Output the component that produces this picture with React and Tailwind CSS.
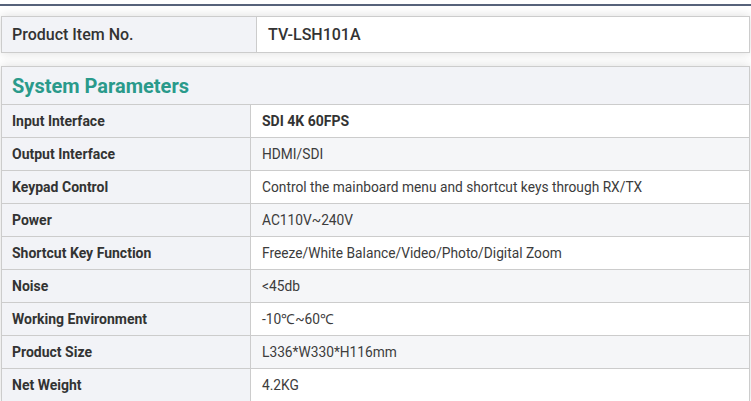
export default function App() {
  const rows = [
    ["Input Interface", "SDI 4K 60FPS", true],
    ["Output Interface", "HDMI/SDI"],
    ["Keypad Control", "Control the mainboard menu and shortcut keys through RX/TX"],
    ["Power", "AC110V~240V"],
    ["Shortcut Key Function", "Freeze/White Balance/Video/Photo/Digital Zoom"],
    ["Noise", "<45db"],
    ["Working Environment", "-10℃~60℃"],
    ["Product Size", "L336*W330*H116mm"],
    ["Net Weight", "4.2KG"],
  ];
  return (
    <div className="w-[751px] h-[401px] overflow-hidden bg-white font-['Roboto',sans-serif] text-[#333]">
      <div className="h-[4px]" />
      <div className="h-[2px] bg-[#56627a]" />
      <div className="pt-[10px] px-[1px]">
        <div className="flex border border-[#cccccc] h-[37px] shadow-[0_0_10px_rgba(0,0,0,0.14)]">
          <div className="w-[255px] border-r border-[#cccccc] bg-[#f2f3f7] flex items-center pl-[10px] text-[16px] font-medium">
            Product Item No.
          </div>
          <div className="flex-1 bg-white flex items-center pl-[11px] text-[16px] font-medium">
            TV-LSH101A
          </div>
        </div>
      </div>
      <div className="pt-[13px] px-[1px]">
        <div className="border border-[#cccccc] border-b-0 shadow-[0_0_10px_rgba(0,0,0,0.14)]">
          <div className="h-[38px] bg-[#f2f3f7] border-b border-[#cccccc] flex items-center pl-[10px] text-[20px] font-bold text-[#2a9a8b]">
            System Parameters
          </div>
          {rows.map(([k, v, b], i) => (
            <div key={k} className={"flex h-[33px] border-b border-[#cccccc] " + (i % 2 === 1 ? "bg-[#f5f6f8]" : "bg-white")}>
              <div className="w-[249px] border-r border-[#cccccc] bg-[#f2f3f7] flex items-center pl-[10px] text-[14px] font-bold">
                {k}
              </div>
              <div className={"flex-1 flex items-center pl-[11px] " + (b ? "font-bold text-[14px] text-[#333]" : "font-normal text-[13.75px] text-[#3c3c3c]")}>
                {v}
              </div>
            </div>
          ))}
        </div>
      </div>
    </div>
  );
}
